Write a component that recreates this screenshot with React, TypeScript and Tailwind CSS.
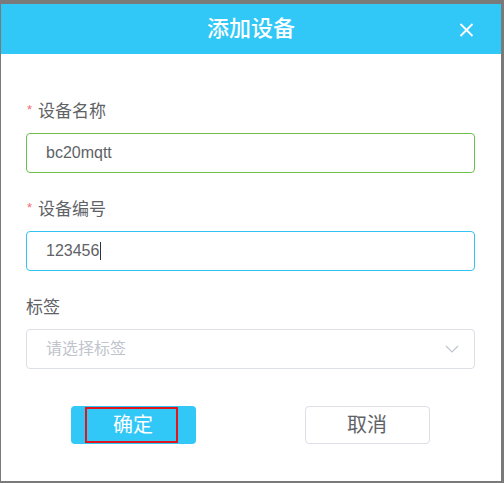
import React from "react";

const font = { fontFamily: '"Liberation Sans", "Noto Sans CJK SC", sans-serif' };

function Label({ text, required }: { text: string; required?: boolean }) {
  return (
    <div className="flex items-center h-[22px] leading-[22px] mb-[10px] text-[17px] text-[#606266]">
      {required && <span className="text-[#f56c6c] text-[13px] w-[12px] pl-[1px] -mt-[4px]">*</span>}
      <span>{text}</span>
    </div>
  );
}

export default function App() {
  return (
    <div className="w-[504px] h-[483px] bg-[#7a7a7a] pt-[4px] pl-[1px]" style={font}>
      <div className="w-[500px] h-[477px] bg-white flex flex-col">
        <div className="relative h-[50px] bg-[#31c7f7] flex items-center justify-center">
          <span className="text-white text-[22px] font-medium leading-none">添加设备</span>
          <svg className="absolute left-[458px] top-[19px]" width="15" height="14" viewBox="0 0 15 14">
            <path d="M1.5 1 L13.5 13 M13.5 1 L1.5 13" stroke="white" strokeWidth="1.8" fill="none" />
          </svg>
        </div>
        <div className="pl-[25px] pr-[26px] pt-[47px] flex flex-col">
          <Label text="设备名称" required />
          <div className="h-[40px] border border-[#6cc04a] rounded-[4px] flex items-center pl-[19px] text-[16px] text-[#606266]">
            bc20mqtt
          </div>
          <div className="h-[26px]" />
          <Label text="设备编号" required />
          <div className="h-[40px] border border-[#33c3f3] rounded-[4px] flex items-center pl-[19px] text-[16px] text-[#606266]">
            <span>123456</span>
            <span className="w-[1px] h-[18px] bg-[#333] ml-[1px]" />
          </div>
          <div className="h-[26px]" />
          <Label text="标签" />
          <div className="h-[40px] border border-[#dcdfe6] rounded-[4px] flex items-center justify-between pl-[19px] pr-[15px] text-[16px] text-[#c0c4cc]">
            <span>请选择标签</span>
            <svg width="14" height="8" viewBox="0 0 14 8">
              <path d="M1 1 L7 7 L13 1" stroke="#c0c4cc" strokeWidth="1.2" fill="none" />
            </svg>
          </div>
          <div className="flex justify-center gap-[109px] mt-[37px] -ml-[1px]">
            <button className="relative w-[125px] h-[38px] rounded-[4px] bg-[#31c7f7] text-white text-[20px] flex items-center justify-center">
              <span className="absolute left-[14px] top-[1px] w-[93px] h-[36px] border-2 border-[#e0161c]" />
              <span>确定</span>
            </button>
            <button className="w-[125px] h-[38px] rounded-[4px] border border-[#dcdfe6] bg-white text-[#606266] text-[20px] flex items-center justify-center">
              取消
            </button>
          </div>
        </div>
      </div>
    </div>
  );
}
